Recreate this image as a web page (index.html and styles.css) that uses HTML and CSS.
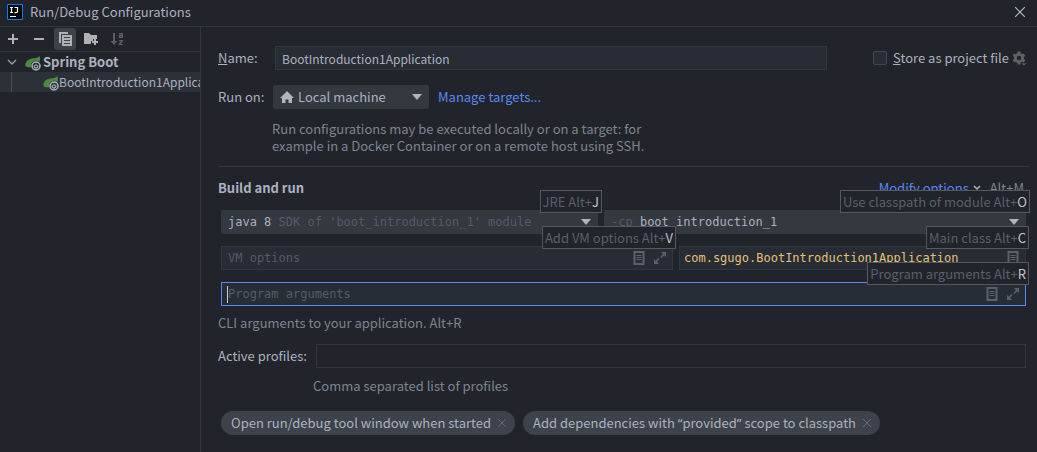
FILE: index.html
```html
<!DOCTYPE html>
<html lang="en">
<head>
<meta charset="utf-8">
<title>Run/Debug Configurations</title>
<link rel="stylesheet" href="styles.css">
</head>
<body>
<svg class="defs" width="0" height="0" aria-hidden="true">
  <symbol id="spring" viewBox="0 0 16 16">
    <path fill="#4e8a3d" d="M14.3 1c.9 2 1 4.400.2 6.200-.9-.9-2.200-1.400-3.500-1.400-2.900 0-5 2.200-5 5.100 0 .5 0 .9.1 1.300-2.600.2-4.400-.1-5.800-1.200C.2 7.500 2 5 5 4c3-1 6.800-.2 9.300-3z"/>
    <circle cx="11" cy="11" r="4" fill="none" stroke="#aeb3ba" stroke-width="1.500"/>
    <path fill="none" stroke="#aeb3ba" stroke-width="1.200" d="M9.500 10a1.900 1.900 0 1 0 3 0M11 8.800v2.200"/>
  </symbol>
  <symbol id="doc" viewBox="0 0 12 14">
    <path fill="none" stroke="currentColor" stroke-width="2" d="M1.500 1h9v12h-9z"/>
    <path stroke="currentColor" d="M3.500 4.500h5M3.500 6.500h5M3.500 8.500h5"/>
  </symbol>
  <symbol id="expand" viewBox="0 0 12 12">
    <path fill="currentColor" d="M7 0h5v5L10.300 3.200 7.500 6 6.500 5 9 2zM0 7l1.700 1.800L4.500 6l1 1L3 9.800 5 12H0z"/>
  </symbol>
  <symbol id="cross" viewBox="0 0 10 10">
    <path fill="none" stroke="currentColor" d="M1 1l8 8M9 1L1 9"/>
  </symbol>
</svg>
<div class="dialog">
  <header class="titlebar">
    <svg class="logo" width="16" height="16" viewBox="0 0 16 16"><path fill="#050505" stroke="#087cfa" d="M.5.5h15v15H.5z"/><path fill="none" stroke="#fff" stroke-width="1.200" d="M3 3.500h3M4.500 3.500v5M3 8.500h3M7.500 3.500h3v3.700q0 1.400-1.400 1.400H7.500M3 12.500h6"/></svg>
    <h1>Run/Debug Configurations</h1>
    <button class="close" aria-label="Close"><svg width="12" height="12"><use href="#cross"/></svg></button>
  </header>
  <div class="body">
    <aside class="sidebar">
      <div class="toolbar">
        <button aria-label="Add"><svg width="12" height="12"><path d="M6 1v10M1 6h10" stroke="currentColor" stroke-width="2"/></svg></button>
        <button aria-label="Remove"><svg width="12" height="12"><path d="M1 6h10" stroke="currentColor" stroke-width="2"/></svg></button>
        <button class="pressed" aria-label="Copy"><svg width="13" height="14"><path fill="currentColor" d="M0 0h9v2H2v9H0z"/><path fill="currentColor" fill-rule="evenodd" d="M3 3h10v11H3zM5 5v1h6V5zM5 8v1h6V8zM5 11v1h6v-1z"/></svg></button>
        <button aria-label="New folder"><svg width="16" height="14"><path fill="currentColor" d="M1 1h5l2 2h6v4h-4v2H8v3H1z"/><path stroke="currentColor" stroke-width="2" d="M12 7v6M9 10h6"/></svg></button>
        <button class="off" aria-label="Sort configurations"><svg width="14" height="14"><path fill="currentColor" d="M3 1h2v8h2.500L4 13 .5 9H3z"/><path fill="none" stroke="currentColor" stroke-width="1.400" d="M9 1.600h3.300v4.400M12 3.500H9.600v1.900H12M9 8.600h3.300L9.400 12.400h3.300"/></svg></button>
      </div>
      <ul class="tree">
        <li class="node"><svg width="10" height="6"><path d="M1 1l4 4 4-4" fill="none" stroke="#9da3ab" stroke-width="1.300"/></svg><svg class="leaf" width="16" height="16"><use href="#spring"/></svg><b>Spring Boot</b></li>
        <li class="node child"><svg class="leaf" width="16" height="16"><use href="#spring"/></svg><span>BootIntroduction1Application</span></li>
      </ul>
    </aside>
    <main class="content">
      <div class="row">
        <label class="caption" for="name"><u>N</u>ame:</label>
        <input id="name" class="field name" value="BootIntroduction1Application">
        <label class="store"><input type="checkbox"><span><u>S</u>tore as project file</span></label>
        <button class="gear" aria-label="Storage settings"><svg width="15" height="15"><g stroke="currentColor" stroke-width="3"><path d="M7 .5v13M1.400 3.800l11.200 6.400M1.400 10.200l11.200-6.400"/></g><circle cx="7" cy="7" r="5" fill="currentColor"/><circle cx="7" cy="7" r="2.200" fill="#21242b"/><path fill="currentColor" stroke="#21242b" stroke-width=".6" d="M9 12h6l-3 3z"/></svg></button>
      </div>
      <div class="row run-row">
        <label class="caption" for="target">Run on:</label>
        <div class="combo target">
          <svg class="home" width="14" height="12"><path fill="currentColor" d="M7 0l7 7h-2v5H8.500V8.500h-3V12H2V7H0z"/></svg>
          <select id="target"><option>Local machine</option></select>
          <svg class="arrow" width="10" height="6"><path fill="currentColor" d="M0 0h10L5 6z"/></svg>
        </div>
        <a class="link" href="#targets">Manage targets...</a>
      </div>
      <p class="hint target-hint">Run configurations may be executed locally or on a target: for example in a Docker Container or on a remote host using SSH.</p>
      <hr>
      <div class="row section">
        <h2>Build and run</h2>
        <a class="link" href="#modify">Modify options</a><svg class="chevron" width="8" height="6"><path d="M1 1l3 3 3-3" fill="none" stroke="currentColor" stroke-width="1.500"/></svg>
        <span class="hint">Alt+M</span>
      </div>
      <div class="options">
        <div class="pair pair-sdk">
          <div class="combo mono">
            <button class="value"><span>java 8</span> <i>SDK of 'boot_introduction_1' module</i></button>
            <svg class="arrow" width="10" height="6"><path fill="currentColor" d="M0 0h10L5 6z"/></svg>
            <span class="tip">JRE Alt+<b>J</b></span>
          </div>
          <div class="combo mono">
            <button class="value"><i>-cp</i> <span>boot_introduction_1</span></button>
            <svg class="arrow" width="10" height="6"><path fill="currentColor" d="M0 0h10L5 6z"/></svg>
            <span class="tip">Use classpath of module Alt+<b>O</b></span>
          </div>
        </div>
        <div class="pair pair-main">
          <div class="box mono">
            <input aria-label="VM options" placeholder="VM options">
            <svg width="12" height="14"><use href="#doc"/></svg><svg width="12" height="12"><use href="#expand"/></svg>
            <span class="tip">Add VM options Alt+<b>V</b></span>
          </div>
          <div class="box main-class mono">
            <input aria-label="Main class" value="com.sgugo.BootIntroduction1Application">
            <svg width="12" height="14"><use href="#doc"/></svg>
            <span class="tip">Main class Alt+<b>C</b></span>
          </div>
        </div>
        <div class="box focused mono">
          <span class="caret"></span>
          <input aria-label="Program arguments" placeholder="Program arguments">
          <svg width="12" height="14"><use href="#doc"/></svg><svg width="12" height="12"><use href="#expand"/></svg>
          <span class="tip">Program arguments Alt+<b>R</b></span>
        </div>
      </div>
      <p class="hint cli">CLI arguments to your application. Alt+R</p>
      <div class="row profiles">
        <label for="profiles">Active profiles:</label>
        <input id="profiles" class="field">
      </div>
      <p class="hint profiles-hint">Comma separated list of profiles</p>
      <div class="row chips">
        <span class="chip"><span>Open run/debug tool window when started</span><button aria-label="Remove"><svg width="10" height="10"><use href="#cross"/></svg></button></span>
        <span class="chip"><span>Add dependencies with <span class="quote">“</span>provided<span class="quote">”</span> scope to classpath</span><button aria-label="Remove"><svg width="10" height="10"><use href="#cross"/></svg></button></span>
      </div>
    </main>
  </div>
</div>
</body>
</html>
```
FILE: styles.css
```css
* { box-sizing: border-box; }
body { margin: 0; background: #21242b; color: #abb2bf; font: 13px/18px "Noto Sans CJK SC", "Noto Sans", sans-serif; }
h1, h2, p, ul { margin: 0; padding: 0; font-size: 13px; line-height: 18px; }
h1 { font-weight: 400; }
button, input, select { font: inherit; color: inherit; background: none; border: 0; padding: 0; margin: 0; outline: 0; min-width: 0; }
button { display: flex; align-items: center; justify-content: center; }
svg { flex: none; display: block; }
.defs { position: absolute; }

.dialog { min-height: 100vh; display: flex; flex-direction: column; }
.titlebar { display: flex; align-items: center; height: 27px; padding: 0 11px 2px 7px; border-bottom: 1px solid #323640; }
.titlebar h1 { flex: 1; padding-left: 7px; }
.close { color: #b8bcc4; }
.body { flex: 1; display: flex; }

.sidebar { width: 201px; flex: none; border-right: 1px solid #323640; overflow: hidden; }
.toolbar { display: flex; gap: 4px; height: 25px; padding: 1px 2px; border-bottom: 1px solid #323640; color: #afb1b3; }
.toolbar button { width: 22px; height: 22px; border-radius: 3px; }
.toolbar .pressed { background: #3d424b; }
.toolbar .off { color: #5b5e63; }
.tree { list-style: none; }
.node { display: flex; align-items: center; height: 20px; padding-left: 7px; white-space: nowrap; }
.node .leaf { margin: 2px 2px 0 8px; }
.child { background: #2c3038; padding-left: 11px; font-size: 12px; }
.child::before { content: ""; align-self: stretch; border-left: 1px solid #4a4e56; }
.child .leaf { margin-left: 31px; margin-right: 0; }

.content { flex: 1; min-width: 0; padding: 19px 8px 16px 17px; }
.row { display: flex; align-items: center; }
.caption { width: 57px; flex: none; }
.field { flex: 1; height: 24px; border: 1px solid #323640; background: #282c34; padding: 0 6px; }
.name { font-size: 12px; }
.store { display: flex; align-items: center; gap: 6px; margin-left: 46px; }
.store input { appearance: none; width: 14px; height: 14px; border: 1px solid #414855; border-radius: 2px; background: #282c34; }
.gear { color: #5f6265; margin: 0 2px 0 3px; }
.run-row { margin-top: 15px; }
.run-row .caption { width: 55px; }

.combo { position: relative; display: flex; align-items: center; height: 24px; background: #333841; border-radius: 2px; padding: 0 7px; }
.target { width: 156px; }
.combo select { appearance: none; flex: 1; padding-left: 4px; }
.home, .arrow { color: #afb4bd; }
.link { color: #568af2; text-decoration: none; }
.target + .link { margin-left: 9px; }
.hint { color: #7e8491; }
.target-hint { max-width: 454px; padding-left: 54px; padding-right: 10px; margin-top: 11px; line-height: 17px; }
hr { border: 0; border-top: 1px solid #323640; margin: 12px 0 12px; }
.section { padding-right: 5px; }
.section h2 { flex: 1; }
.chevron { margin: 0 9px 0 4px; }

.options { display: grid; gap: 12px; margin: 13px 3px 0 3px; }
.pair { display: grid; gap: 6px; }
.pair-sdk { grid-template-columns: minmax(0, 377fr) minmax(0, 422fr); }
.pair-main { grid-template-columns: minmax(0, 452fr) minmax(0, 347fr); }
.mono { font-family: "DejaVu Sans Mono", monospace; font-size: 12px; }
.value { flex: 1; display: block; text-align: left; white-space: pre; }
.value i { font-style: normal; color: #565c68; }
.box { position: relative; display: flex; align-items: center; gap: 9px; height: 24px; border: 1px solid #323640; background: #282c34; padding: 0 6px; color: #5b616b; }
.box input { flex: 1; }
.main-class { padding-left: 4px; }
.main-class input { color: #e5c07b; }
.focused { border-color: #568af2; }
.caret { position: absolute; left: 5px; top: 3px; width: 1px; height: 17px; background: #c8ccd4; }
::placeholder { color: #565c68; opacity: 1; }
.tip { position: absolute; z-index: 1; top: -20px; right: -4px; height: 23px; padding: 0 2px; border: 1px solid #55585c; background: #21242b; color: #5a606c; font: 13px/21px "Noto Sans CJK SC", "Noto Sans", sans-serif; white-space: nowrap; }
.box .tip { top: -21px; }
.tip b { font-weight: 400; color: #c0c5ce; }

.cli { margin-top: 8px; }
.profiles { gap: 9px; margin: 12px 3px 0 0; }
.profiles .field { background: #21242b; }
.profiles-hint { margin: 9px 0 0 95px; }
.chips { gap: 8px; margin: 16px 0 0 3px; }
.chip { display: flex; align-items: center; gap: 6px; height: 24px; padding: 0 8px 0 10px; border-radius: 12px; background: #3d424b; white-space: nowrap; }
.chip button { color: #646a75; }
.quote { font-family: "Noto Sans", sans-serif; }
```
